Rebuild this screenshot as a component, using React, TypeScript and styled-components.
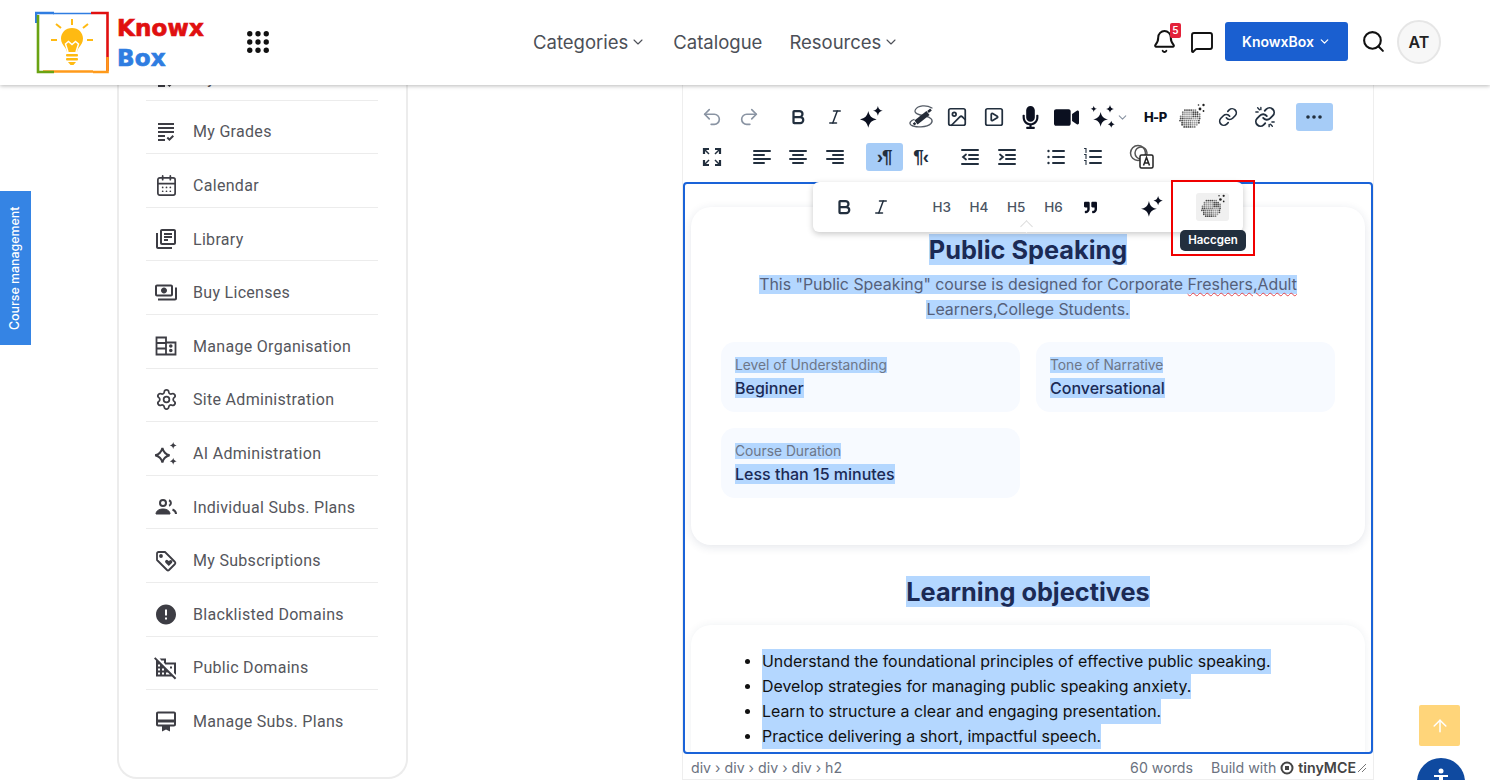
import React from "react";
import styled, { createGlobalStyle } from "styled-components";
import {
    ArrowUp,
    Bell,
    Bold,
    CalendarDays,
    ChevronDown,
    Image,
    Italic,
    Link,
    MessageSquare,
    Redo2,
    Search,
    Settings,
    SquarePlay,
    Undo2,
} from "lucide-react";
import {
    MdError,
    MdOutlineCardMembership,
    MdOutlineDomainDisabled,
    MdOutlineGrading,
    MdOutlineLibraryBooks,
    MdOutlinePayments,
} from "react-icons/md";
import { FaMicrophone, FaQuoteRight, FaVideo } from "react-icons/fa";

const INK = "#222f3e";
const SELECTED = "#b4d7ff";
const NAVY = "#1b2a55";

/* ---------- drawn icons ---------- */

const Sparkle = ({ size = 25 }: { size?: number }) => (
    <svg width={size} height={size} viewBox="3 3 18 18" fill="#0b1020">
        <path d="M9.500 7c.9 4 2.600 5.700 6.500 6.500-3.900.8-5.600 2.500-6.500 6.500-.9-4-2.600-5.700-6.500-6.500C6.900 12.700 8.600 11 9.500 7z" />
        <path d="M17 3c.5 2.300 1.500 3.300 3.800 3.800-2.300.5-3.300 1.500-3.800 3.800-.5-2.300-1.500-3.300-3.800-3.800C15.500 6.300 16.500 5.300 17 3z" />
    </svg>
);

const SparkleGroup = () => (
    <svg width={25} height={25} viewBox="2 2 20 20" fill="#0b1020">
        <path d="M10.500 7.500c.8 3.600 2.300 5.100 5.900 5.900-3.600.8-5.100 2.300-5.900 5.900-.8-3.600-2.300-5.100-5.900-5.900 3.600-.8 5.100-2.300 5.900-5.900z" />
        <path d="M5 2.500c.3 1.500 1 2.200 2.500 2.500-1.500.3-2.200 1-2.500 2.500C4.700 6 4 5.300 2.500 5 4 4.700 4.700 4 5 2.500z" />
        <path d="M18 2c.4 1.900 1.200 2.700 3.100 3.100-1.900.4-2.700 1.200-3.100 3.100-.4-1.900-1.200-2.700-3.100-3.100C16.800 4.700 17.600 3.900 18 2z" />
        <path d="M19 14.500c.4 1.700 1.100 2.400 2.800 2.800-1.700.4-2.400 1.100-2.800 2.800-.4-1.700-1.100-2.400-2.800-2.800 1.700-.4 2.400-1.100 2.800-2.800z" />
    </svg>
);

const PenSwirl = () => (
    <svg width={28} height={28} viewBox="0 0 28 28" fill="none" stroke="#555c66" strokeWidth="1.300" strokeLinecap="round">
        <path d="M25 5C19 1.500 11 2.500 8.500 6.500s4 5.500 9.500 6.500c5.500 1 9 4 6 7.500-4 4-16 4.500-20 1.500-2.500-2 0-4.500 3-5.500" />
        <path d="M9 19.500L21 10" stroke="#252c38" strokeWidth="5" strokeLinecap="butt" />
        <path d="M6.500 21.500l2-1.500M21 9l3-2.500" stroke="#252c38" strokeWidth="2.500" strokeLinecap="butt" />
    </svg>
);

const BRAIN_DOTS: [number, number, string][] = [];
for (let y = 5; y < 27; y += 2.1) {
    for (let x = 2; x < 25; x += 2.1) {
        const inside = (x - 12) ** 2 / 105 + (y - 15.5) ** 2 / 108 < 1;
        const shade = (Math.round(x * 3) + Math.round(y * 7)) % 3;
        if (inside) BRAIN_DOTS.push([x + (Math.round(y) % 2) * 0.7, y, ["#4a4a4a", "#7c7c7c", "#a0a0a0"][shade]]);
    }
}

const BrainDots = ({ size = 28 }: { size?: number }) => (
    <svg width={size} height={size} viewBox="0 0 28 28">
        {BRAIN_DOTS.map(([x, y, fill]) => (
            <circle key={`${x}-${y}`} cx={x} cy={y} r="0.950" fill={fill} />
        ))}
        <g fill="#222">
            <circle cx="22" cy="6" r="1.400" />
            <circle cx="25.500" cy="2" r="1.200" />
            <circle cx="25.500" cy="8" r="0.900" />
            <circle cx="20.500" cy="2" r="0.800" />
        </g>
    </svg>
);

const Lines = ({ rows }: { rows: [number, number][] }) => (
    <svg width={20} height={20} viewBox="0 0 20 20" stroke={INK} strokeWidth="2" strokeLinecap="round">
        {rows.map(([a, b], i) => (
            <line key={i} x1={a} x2={b} y1={4 + i * 4} y2={4 + i * 4} />
        ))}
    </svg>
);

const Indent = ({ flip }: { flip?: boolean }) => (
    <svg width={20} height={20} viewBox="0 0 20 20" stroke={INK} strokeWidth="2" strokeLinecap="round" fill="none">
        <line x1="2" x2="18" y1="3" y2="3" />
        <line x1="9" x2="18" y1="8" y2="8" />
        <line x1="9" x2="18" y1="12" y2="12" />
        <line x1="2" x2="18" y1="17" y2="17" />
        <path d={flip ? "M3 7.500l3 2.500-3 2.500" : "M6 7.500l-3 2.500 3 2.500"} strokeWidth="1.800" />
    </svg>
);

const ListDots = ({ numbered }: { numbered?: boolean }) => (
    <svg width={20} height={20} viewBox="0 0 20 20" stroke={INK} strokeWidth="2" strokeLinecap="round" fill={INK}>
        {[4, 10, 16].map((y) => (
            <React.Fragment key={y}>
                <line x1="7" x2="18" y1={y} y2={y} />
                {numbered ? (
                    <path d={`M1.500 ${y - 2.500}h1.500v4`} strokeWidth="1.100" fill="none" />
                ) : (
                    <circle cx="2.500" cy={y} r="1.200" stroke="none" />
                )}
            </React.Fragment>
        ))}
    </svg>
);

const Fullscreen = () => (
    <svg width={20} height={20} viewBox="0 0 20 20" fill="none" stroke={INK} strokeWidth="2.200">
        <path d="M2 7V2h5M13 2h5v5M18 13v5h-5M7 18H2v-5" />
        <path d="M3 3l4 4M17 3l-4 4M17 17l-4-4M3 17l4-4" strokeWidth="1.500" />
    </svg>
);

const Translate = () => (
    <svg width={28} height={28} viewBox="0 0 28 28" fill="none" stroke="#555" strokeWidth="1.500">
        <circle cx="10" cy="10" r="7.500" />
        <circle cx="13" cy="10" r="6" />
        <rect x="12" y="12" width="13" height="13" rx="1.500" fill="#fff" stroke="#222" />
        <path d="M15.500 22.500l3-8 3 8M16.500 20h4" stroke="#222" strokeWidth="1.500" />
    </svg>
);

const BrokenLink = () => (
    <svg width={22} height={22} viewBox="0 0 24 24" fill="none" stroke={INK} strokeWidth="2" strokeLinecap="round">
        <path d="M10 13a5 5 0 0 0 7.540.54l3-3a5 5 0 0 0-7.070-7.070l-1.720 1.710" />
        <path d="M14 11a5 5 0 0 0-7.540-.54l-3 3a5 5 0 0 0 7.070 7.070l1.710-1.710" />
        <path d="M4 2l2 2M2 6.500h2.500M7.500 1.500V4M20 22l-2-2M22 17.500h-2.500M16.500 22.500V20" strokeWidth="1.500" />
    </svg>
);

const OrgIcon = () => (
    <svg width={24} height={24} viewBox="0 0 24 24" fill="none" stroke="#3d3d44" strokeWidth="1.800">
        <path d="M2.500 3.500h9.500v17H2.500zM2.500 9h9.500M2.500 14.500h9.500M12 8.500h9.500v12H12z" />
        <circle cx="16.800" cy="12" r="0.900" fill="#3d3d44" />
        <circle cx="16.800" cy="16.500" r="0.900" fill="#3d3d44" />
    </svg>
);

const AiIcon = () => (
    <svg width={25} height={25} viewBox="2 1 20 20" fill="#3d3d44">
        <path d="M9 6.500c.9 3.700 2.300 5.200 6 6-3.700.9-5.100 2.300-6 6-.9-3.700-2.300-5.100-6-6 3.700-.8 5.100-2.300 6-6z" fill="none" stroke="#3d3d44" strokeWidth="1.700" />
        <path d="M18 1.500c.4 1.800 1.100 2.500 2.900 2.900-1.800.4-2.500 1.100-2.900 2.900-.4-1.800-1.100-2.500-2.900-2.900 1.800-.4 2.500-1.100 2.900-2.900z" />
        <path d="M18 14.500c.4 1.800 1.100 2.500 2.900 2.900-1.800.4-2.500 1.100-2.900 2.900-.4-1.800-1.100-2.500-2.900-2.900 1.800-.4 2.500-1.100 2.900-2.900z" />
    </svg>
);

const PeopleIcon = () => (
    <svg width={24} height={24} viewBox="0 0 24 24" fill="none" stroke="#3d3d44" strokeWidth="2">
        <circle cx="9" cy="8" r="3" />
        <path d="M15 5.200a3 3 0 0 1 0 5.600" />
        <path d="M2 19c0-3 3-5 7-5s7 2 7 5z" fill="#3d3d44" strokeWidth="1" />
        <path d="M18.500 14.500c2 .8 3.500 2.500 3.500 4.500" />
    </svg>
);

const TagHeart = () => (
    <svg width={24} height={24} viewBox="0 0 24 24" fill="none" stroke="#3d3d44" strokeWidth="1.800" strokeLinejoin="round">
        <path d="M3 4.500A1.500 1.500 0 0 1 4.500 3H11l10 10a1.500 1.500 0 0 1 0 2l-6 6a1.500 1.500 0 0 1-2 0L3 11z" />
        <circle cx="7" cy="7" r="1" fill="#3d3d44" />
        <path d="M14.800 17l-3.300-3.300a1.700 1.700 0 0 1 2.500-2.300l.8.700.8-.7a1.700 1.700 0 0 1 2.300 2.500z" fill="#3d3d44" stroke="none" />
    </svg>
);

const Logo = () => (
    <svg width={76} height={64} viewBox="0 0 76 64" fill="none" strokeWidth="2.600">
        <path d="M1 12V2h18" stroke="#2f7de1" />
        <path d="M18 2.500h38" stroke="#2f7de1" strokeWidth="1.400" />
        <path d="M56 2h16.500v30" stroke="#e01010" />
        <path d="M72.500 32v28" stroke="#e01010" />
        <path d="M72.500 46v15H58" stroke="#ff9a1a" />
        <path d="M58 60.500H8" stroke="#ff9a1a" />
        <path d="M3 4v57h16" stroke="#6aa312" />
        <g fill="#ffba12">
            <path d="M37 17c-6.500 0-11 4.800-11 10.500 0 4 2 6.500 4 9 1.300 1.600 1.800 3 2 4.500h10c.2-1.500.7-2.900 2-4.500 2-2.500 4-5 4-9C48 21.800 43.500 17 37 17z" />
            <rect x="31" y="43" width="12" height="2.400" rx="1" />
            <rect x="31" y="47" width="12" height="2.400" rx="1" />
            <path d="M33 51h8l-2.500 3h-3z" />
        </g>
        <path d="M33 41l-2.500-8 3-2.500 3.500 3 3.500-3 3 2.500-2.500 8" stroke="#fff" strokeWidth="1.500" />
        <path d="M37 8v6M21 13l5 4M53 13l-5 4M16 29h6M52 29h6" stroke="#ffba12" strokeWidth="2" />
    </svg>
);

const AppsGrid = () => (
    <svg width={22} height={22} viewBox="0 0 24 24" fill="#111">
        {[3, 12, 21].flatMap((y) =>
            [3, 12, 21].map((x) => <circle key={`${x}-${y}`} cx={x} cy={y} r="2.900" />)
        )}
    </svg>
);

const TinyLogo = () => (
    <svg width={14} height={14} viewBox="0 0 14 14" fill="none" stroke="#444" strokeWidth="2">
        <circle cx="7" cy="7" r="5.500" />
        <rect x="5" y="5" width="4" height="4" fill="#444" stroke="none" />
    </svg>
);

/* ---------- data ---------- */

const SIDE_ITEMS: { label: string; icon: React.ReactNode }[] = [
    { label: "My Courses", icon: <MdOutlineGrading size={24} /> },
    { label: "My Grades", icon: <MdOutlineGrading size={24} /> },
    { label: "Calendar", icon: <CalendarDays size={23} strokeWidth={1.800} /> },
    { label: "Library", icon: <MdOutlineLibraryBooks size={24} /> },
    { label: "Buy Licenses", icon: <MdOutlinePayments size={25} /> },
    { label: "Manage Organisation", icon: <OrgIcon /> },
    { label: "Site Administration", icon: <Settings size={23} strokeWidth={1.800} /> },
    { label: "AI Administration", icon: <AiIcon /> },
    { label: "Individual Subs. Plans", icon: <PeopleIcon /> },
    { label: "My Subscriptions", icon: <TagHeart /> },
    { label: "Blacklisted Domains", icon: <MdError size={25} /> },
    { label: "Public Domains", icon: <MdOutlineDomainDisabled size={25} /> },
    { label: "Manage Subs. Plans", icon: <MdOutlineCardMembership size={25} /> },
];

const OBJECTIVES = [
    "Understand the foundational principles of effective public speaking.",
    "Develop strategies for managing public speaking anxiety.",
    "Learn to structure a clear and engaging presentation.",
    "Practice delivering a short, impactful speech.",
];

export default function App() {
    return (
        <Page>
            <GlobalStyle />
            <Header>
                <Brand>
                    <Logo />
                    <BrandText>
                        <BrandWord color="#e01010">Knowx</BrandWord>
                        <BrandWord color="#2f7de1">Box</BrandWord>
                    </BrandText>
                    <AppsButton>
                        <AppsGrid />
                    </AppsButton>
                </Brand>
                <Nav>
                    <NavItem>
                        Categories <ChevronDown size={16} strokeWidth={1.600} />
                    </NavItem>
                    <NavItem>Catalogue</NavItem>
                    <NavItem>
                        Resources <ChevronDown size={16} strokeWidth={1.600} />
                    </NavItem>
                </Nav>
                <HeaderActions>
                    <BellWrap>
                        <Bell size={25} strokeWidth={1.900} color="#111" />
                        <Badge>5</Badge>
                    </BellWrap>
                    <MessageSquare size={24} strokeWidth={1.900} color="#111" />
                    <BoxButton>
                        KnowxBox <ChevronDown size={13} strokeWidth={2.400} />
                    </BoxButton>
                    <Search size={25} strokeWidth={2} color="#111" />
                    <Avatar>AT</Avatar>
                </HeaderActions>
            </Header>

            <Main>
                <Sidebar>
                    {SIDE_ITEMS.map((item, i) => (
                        <SideRow key={item.label} $last={i === SIDE_ITEMS.length - 1}>
                            <SideIcon>{item.icon}</SideIcon>
                            {item.label}
                        </SideRow>
                    ))}
                </Sidebar>

                <Editor>
                    <Toolbar>
                        <ToolRow>
                            <Group>
                                <ToolButton $muted><Undo2 size={22} strokeWidth={1.800} /></ToolButton>
                                <ToolButton $muted><Redo2 size={22} strokeWidth={1.800} /></ToolButton>
                            </Group>
                            <Group>
                                <ToolButton><Bold size={18} strokeWidth={3} /></ToolButton>
                                <ToolButton><Italic size={18} strokeWidth={2} /></ToolButton>
                                <ToolButton><Sparkle size={23} /></ToolButton>
                            </Group>
                            <Group>
                                <ToolButton><PenSwirl /></ToolButton>
                                <ToolButton><Image size={22} strokeWidth={1.900} /></ToolButton>
                                <ToolButton><SquarePlay size={22} strokeWidth={1.900} /></ToolButton>
                                <ToolButton><FaMicrophone size={23} color="#0b1020" /></ToolButton>
                                <ToolButton><FaVideo size={25} color="#0b1020" /></ToolButton>
                                <ToolButton $width={52}>
                                    <SparkleGroup />
                                    <ChevronDown size={13} color="#8a94a3" />
                                </ToolButton>
                                <ToolButton><HpLabel>H-P</HpLabel></ToolButton>
                                <ToolButton><BrainDots /></ToolButton>
                                <ToolButton><Link size={20} strokeWidth={2} /></ToolButton>
                                <ToolButton><BrokenLink /></ToolButton>
                            </Group>
                            <Group>
                                <ToolButton $active>
                                    <svg width={18} height={4} viewBox="0 0 18 4" fill={INK}>
                                        <circle cx="3" cy="2" r="1.800" />
                                        <circle cx="9" cy="2" r="1.800" />
                                        <circle cx="15" cy="2" r="1.800" />
                                    </svg>
                                </ToolButton>
                            </Group>
                        </ToolRow>
                        <ToolRow>
                            <Group>
                                <ToolButton><Fullscreen /></ToolButton>
                            </Group>
                            <Group>
                                <ToolButton><Lines rows={[[2, 18], [2, 12], [2, 18], [2, 12]]} /></ToolButton>
                                <ToolButton><Lines rows={[[2, 18], [5, 15], [2, 18], [5, 15]]} /></ToolButton>
                                <ToolButton><Lines rows={[[2, 18], [8, 18], [2, 18], [8, 18]]} /></ToolButton>
                            </Group>
                            <Group>
                                <ToolButton $active><PilcrowLabel>›¶</PilcrowLabel></ToolButton>
                                <ToolButton><PilcrowLabel>¶‹</PilcrowLabel></ToolButton>
                            </Group>
                            <Group>
                                <ToolButton><Indent /></ToolButton>
                                <ToolButton><Indent flip /></ToolButton>
                            </Group>
                            <Group>
                                <ToolButton><ListDots /></ToolButton>
                                <ToolButton><ListDots numbered /></ToolButton>
                            </Group>
                            <Group>
                                <ToolButton><Translate /></ToolButton>
                            </Group>
                        </ToolRow>
                    </Toolbar>

                    <ContentFrame>
                        <HeroCard>
                            <Title><Sel>Public Speaking</Sel></Title>
                            <Lead>
                                <Sel>
                                    This "Public Speaking" course is designed for Corporate{" "}
                                    <Misspelt>Freshers,Adult</Misspelt> Learners,College Students.
                                </Sel>
                            </Lead>
                            <InfoGrid>
                                <InfoCard>
                                    <InfoLabel><Sel>Level of Understanding</Sel></InfoLabel>
                                    <InfoValue><Sel>Beginner</Sel></InfoValue>
                                </InfoCard>
                                <InfoCard>
                                    <InfoLabel><Sel>Tone of Narrative</Sel></InfoLabel>
                                    <InfoValue><Sel>Conversational</Sel></InfoValue>
                                </InfoCard>
                                <InfoCard>
                                    <InfoLabel><Sel>Course Duration</Sel></InfoLabel>
                                    <InfoValue><Sel>Less than 15 minutes</Sel></InfoValue>
                                </InfoCard>
                            </InfoGrid>
                        </HeroCard>
                        <SectionTitle><Sel>Learning objectives</Sel></SectionTitle>
                        <ListCard>
                            <ObjectiveList>
                                {OBJECTIVES.map((text) => (
                                    <li key={text}><ObjectiveSel>{text}</ObjectiveSel></li>
                                ))}
                            </ObjectiveList>
                        </ListCard>
                    </ContentFrame>

                    <StatusBar>
                        <span>div › div › div › div › h2</span>
                        <StatusRight>
                            <span>60 words</span>
                            <BuildWith>
                                Build with <TinyLogo /> <TinyName>tinyMCE</TinyName>
                            </BuildWith>
                            <svg width={10} height={10} viewBox="0 0 10 10" stroke="#777">
                                <path d="M1 9l8-8M5 9l4-4" />
                            </svg>
                        </StatusRight>
                    </StatusBar>
                </Editor>
            </Main>

            <CourseTab>Course management</CourseTab>

            <QuickBar>
                <QuickButton><Bold size={18} strokeWidth={3} /></QuickButton>
                <QuickButton><Italic size={18} strokeWidth={2} /></QuickButton>
                <QuickHeadings>
                    <HeadingButton>H3</HeadingButton>
                    <HeadingButton>H4</HeadingButton>
                    <HeadingButton>H5</HeadingButton>
                    <HeadingButton>H6</HeadingButton>
                    <HeadingButton><FaQuoteRight size={13} color="#0b1020" /></HeadingButton>
                </QuickHeadings>
                <QuickButton $left={24}><Sparkle size={22} /></QuickButton>
                <BrainButton><BrainDots size={26} /></BrainButton>
                <QuickCaret />
            </QuickBar>
            <Tooltip>Haccgen</Tooltip>
            <RedBox />

            <ScrollTop><ArrowUp size={20} strokeWidth={1.800} /></ScrollTop>
            <AccessButton>
                <svg width={20} height={20} viewBox="0 0 20 20" fill="#fff">
                    <circle cx="10" cy="5" r="2.500" />
                    <path d="M3 9h14v2h-5v6H8v-6H3z" />
                </svg>
            </AccessButton>
        </Page>
    );
}

const GlobalStyle = createGlobalStyle`
    html, body {
        margin: 0;
        padding: 0;
        background: #fff;
    }
    * {
        box-sizing: border-box;
    }
`;

const Page = styled.div`
    position: relative;
    width: 1490px;
    height: 780px;
    overflow: hidden;
    background: #fff;
    font-family: Inter, "Liberation Sans", sans-serif;
`;

/* header */

const Header = styled.header`
    position: relative;
    z-index: 10;
    display: grid;
    grid-template-columns: 533px 1fr auto;
    align-items: center;
    height: 85px;
    padding-right: 49px;
    background: #fff;
    box-shadow: 0 1px 4px rgba(0, 0, 0, 0.28);
`;

const Brand = styled.div`
    display: flex;
    align-items: center;
    padding-left: 35px;
`;

const BrandText = styled.div`
    display: flex;
    flex-direction: column;
    gap: 4px;
    margin-left: 6px;
    width: 130px;
`;

const BrandWord = styled.span<{ color: string }>`
    font-family: "DejaVu Sans", sans-serif;
    font-weight: 700;
    font-size: 23px;
    line-height: 26px;
    letter-spacing: 0.2px;
    color: ${(props) => props.color};
    -webkit-text-stroke: 0.7px ${(props) => props.color};
`;

const AppsButton = styled.div`
    display: flex;
    margin: 0 0 2px 0;
`;

const Nav = styled.nav`
    display: flex;
    align-items: center;
    gap: 27px;
    margin-bottom: 2px;
`;

const NavItem = styled.div`
    display: flex;
    align-items: center;
    gap: 2px;
    font-size: 18.500px;
    color: #4c4f57;
`;

const HeaderActions = styled.div`
    display: flex;
    align-items: center;
    gap: 13px;
    margin-bottom: 2px;
`;

const BellWrap = styled.div`
    position: relative;
    display: flex;
`;

const Badge = styled.span`
    position: absolute;
    top: -6px;
    right: -4px;
    width: 11px;
    height: 15px;
    border-radius: 2px;
    background: #e3223a;
    color: #fff;
    font-size: 10px;
    font-weight: 600;
    line-height: 15px;
    text-align: center;
`;

const BoxButton = styled.button`
    display: flex;
    align-items: center;
    justify-content: center;
    gap: 4px;
    width: 123px;
    height: 39px;
    margin-left: -2px;
    border: 0;
    border-radius: 3px;
    background: #1a5fd0;
    color: #fff;
    font-family: inherit;
    font-size: 14px;
    font-weight: 600;
`;

const Avatar = styled.div`
    display: flex;
    align-items: center;
    justify-content: center;
    width: 44px;
    height: 44px;
    margin-left: -2px;
    border: 2px solid #e6e6e6;
    border-radius: 50%;
    background: #f7f7f7;
    color: #222;
    font-size: 16px;
    font-weight: 600;
`;

/* sidebar */

const Main = styled.main`
    display: flex;
    align-items: flex-start;
    padding-left: 117px;
`;

const Sidebar = styled.aside`
    width: 291px;
    height: 732px;
    margin-top: -38px;
    padding: 0 28px 34px 27px;
    border: 2px solid #ececec;
    border-top: 0;
    border-radius: 0 0 20px 20px;
`;

const SideRow = styled.div<{ $last?: boolean }>`
    display: flex;
    align-items: center;
    gap: 15px;
    height: 53.600px;
    padding: 10px 0 0 8px;
    border-bottom: ${(props) => (props.$last ? "0" : "1px solid #ececec")};
    font-family: Roboto, "Liberation Sans", sans-serif;
    font-size: 16px;
    letter-spacing: 0.3px;
    color: #55565c;
`;

const SideIcon = styled.span`
    display: flex;
    align-items: center;
    justify-content: center;
    width: 24px;
    color: #3d3d44;
`;

/* editor */

const Editor = styled.section`
    display: flex;
    flex-direction: column;
    width: 692px;
    height: 695px;
    margin-left: 274px;
    border: 1px solid #eeeeee;
    border-top: 0;
`;

const Toolbar = styled.div`
    display: flex;
    flex-direction: column;
    height: 97px;
    padding: 12px 0 5px 11px;
`;

const ToolRow = styled.div`
    display: flex;
    align-items: center;
    gap: 13px;
    height: 40px;
`;

const Group = styled.div`
    display: flex;
    align-items: center;
`;

const ToolButton = styled.div<{ $active?: boolean; $muted?: boolean; $width?: number }>`
    display: flex;
    align-items: center;
    justify-content: ${(props) => (props.$width ? "flex-start" : "center")};
    gap: 1px;
    flex: none;
    width: ${(props) => props.$width ?? 36.5}px;
    height: 28px;
    padding-left: ${(props) => (props.$width ? 5 : 0)}px;
    border-radius: 3px;
    background: ${(props) => (props.$active ? "#a6ccf7" : "transparent")};
    color: ${(props) => (props.$muted ? "#8a94a3" : INK)};
`;

const HpLabel = styled.span`
    font-size: 13px;
    font-weight: 800;
    letter-spacing: -0.6px;
    color: #0b1020;
`;

const PilcrowLabel = styled.span`
    font-family: "Liberation Sans", sans-serif;
    font-size: 19px;
    font-weight: 700;
    letter-spacing: -1px;
    color: ${INK};
`;

const ContentFrame = styled.div`
    flex: none;
    height: 572px;
    padding: 23px 6px 0;
    overflow: hidden;
    border: 2px solid #1a63d8;
    border-radius: 4px;
`;

const HeroCard = styled.div`
    height: 338px;
    padding: 26px 30px 0;
    border-radius: 20px;
    background: #fff;
    box-shadow: 0 2px 10px rgba(30, 50, 90, 0.12);
    text-align: center;
`;

const Sel = styled.span`
    background: ${SELECTED};
`;

const Title = styled.h2`
    margin: 0;
    font-size: 25.300px;
    font-weight: 700;
    line-height: 34px;
    color: ${NAVY};
`;

const Lead = styled.p`
    width: 570px;
    margin: 4px auto 20px;
    padding-top: 1px;
    font-size: 15.900px;
    line-height: 25px;
    color: #55607a;
`;

const Misspelt = styled.span`
    text-decoration: underline wavy #e5484d 1px;
    text-underline-offset: 2px;
`;

const InfoGrid = styled.div`
    display: grid;
    grid-template-columns: 299px 299px;
    gap: 16px;
    text-align: left;
`;

const InfoCard = styled.div`
    height: 70px;
    padding: 12px 14px;
    border-radius: 14px;
    background: #f7faff;
`;

const InfoLabel = styled.div`
    font-size: 13.800px;
    line-height: 22px;
    color: #6d7688;
`;

const InfoValue = styled.div`
    font-size: 16px;
    font-weight: 500;
    line-height: 25px;
    color: ${NAVY};
`;

const SectionTitle = styled.h2`
    margin: 30px 0 16px;
    font-size: 25.300px;
    font-weight: 700;
    line-height: 34px;
    text-align: center;
    color: ${NAVY};
`;

const ListCard = styled.div`
    height: 200px;
    padding-top: 24px;
    border-radius: 20px;
    background: #fff;
    box-shadow: 0 0 8px rgba(30, 50, 90, 0.07);
`;

const ObjectiveList = styled.ul`
    margin: 0;
    padding: 0 0 0 71px;
    font-size: 15.900px;
    line-height: 25px;
    color: #111;
`;

const ObjectiveSel = styled.span`
    display: inline-block;
    background: ${SELECTED};
`;

const StatusBar = styled.div`
    display: flex;
    align-items: center;
    justify-content: space-between;
    height: 29px;
    padding: 2px 6px 0 8px;
    font-size: 14.200px;
    color: #6b7280;
`;

const StatusRight = styled.div`
    display: flex;
    align-items: center;
    gap: 18px;
`;

const BuildWith = styled.div`
    display: flex;
    align-items: center;
    gap: 4px;
    margin-right: -17px;
`;

const TinyName = styled.span`
    font-weight: 600;
    color: #444;
`;

/* things lying over the page */

const CourseTab = styled.div`
    position: absolute;
    left: 0;
    top: 191px;
    display: flex;
    align-items: center;
    justify-content: center;
    width: 31px;
    height: 154px;
    padding-left: 3px;
    background: #3584e4;
    color: #fff;
    font-size: 12.400px;
    font-weight: 500;
    writing-mode: vertical-rl;
    transform: rotate(180deg);
`;

const QuickBar = styled.div`
    position: absolute;
    left: 813px;
    top: 182px;
    z-index: 4;
    display: flex;
    align-items: center;
    width: 430px;
    height: 50px;
    padding-left: 12px;
    border-radius: 6px;
    background: #fff;
    box-shadow: 0 2px 6px rgba(0, 0, 0, 0.22);
`;

const QuickButton = styled.div<{ $left?: number }>`
    display: flex;
    align-items: center;
    justify-content: center;
    flex: none;
    width: 37px;
    height: 28px;
    margin-left: ${(props) => props.$left ?? 0}px;
    color: ${INK};
`;

const QuickHeadings = styled.div`
    display: flex;
    margin-left: 24px;
`;

const HeadingButton = styled.div`
    display: flex;
    align-items: center;
    justify-content: center;
    width: 37.300px;
    height: 28px;
    font-size: 13.500px;
    font-weight: 500;
    color: #4a5462;
`;

const BrainButton = styled.div`
    display: flex;
    align-items: center;
    justify-content: center;
    width: 33px;
    height: 28px;
    margin-left: 26px;
    border-radius: 3px;
    background: #f0f0f0;
`;

const QuickCaret = styled.span`
    position: absolute;
    left: 209px;
    bottom: 0;
    width: 9px;
    height: 9px;
    background: #fff;
    border-right: 1px solid #dcdcdc;
    border-bottom: 1px solid #dcdcdc;
    transform: translateY(-1px) rotate(-135deg);
`;

const Tooltip = styled.div`
    position: absolute;
    left: 1180px;
    top: 230px;
    z-index: 5;
    width: 66px;
    height: 21px;
    border-radius: 5px;
    background: #222f3e;
    color: #fff;
    font-size: 11.500px;
    font-weight: 600;
    line-height: 21px;
    text-align: center;
`;

const RedBox = styled.div`
    position: absolute;
    left: 1171px;
    top: 180px;
    z-index: 6;
    width: 84px;
    height: 76px;
    border: 2px solid #f00000;
`;

const ScrollTop = styled.div`
    position: absolute;
    left: 1419px;
    top: 705px;
    display: flex;
    align-items: center;
    justify-content: center;
    width: 41px;
    height: 41px;
    border-radius: 2px;
    background: #ffd57a;
    color: #fff;
`;

const AccessButton = styled.div`
    position: absolute;
    left: 1417px;
    top: 758px;
    display: flex;
    justify-content: center;
    width: 48px;
    height: 48px;
    padding-top: 8px;
    border-radius: 50%;
    background: #0f4aa0;
`;
